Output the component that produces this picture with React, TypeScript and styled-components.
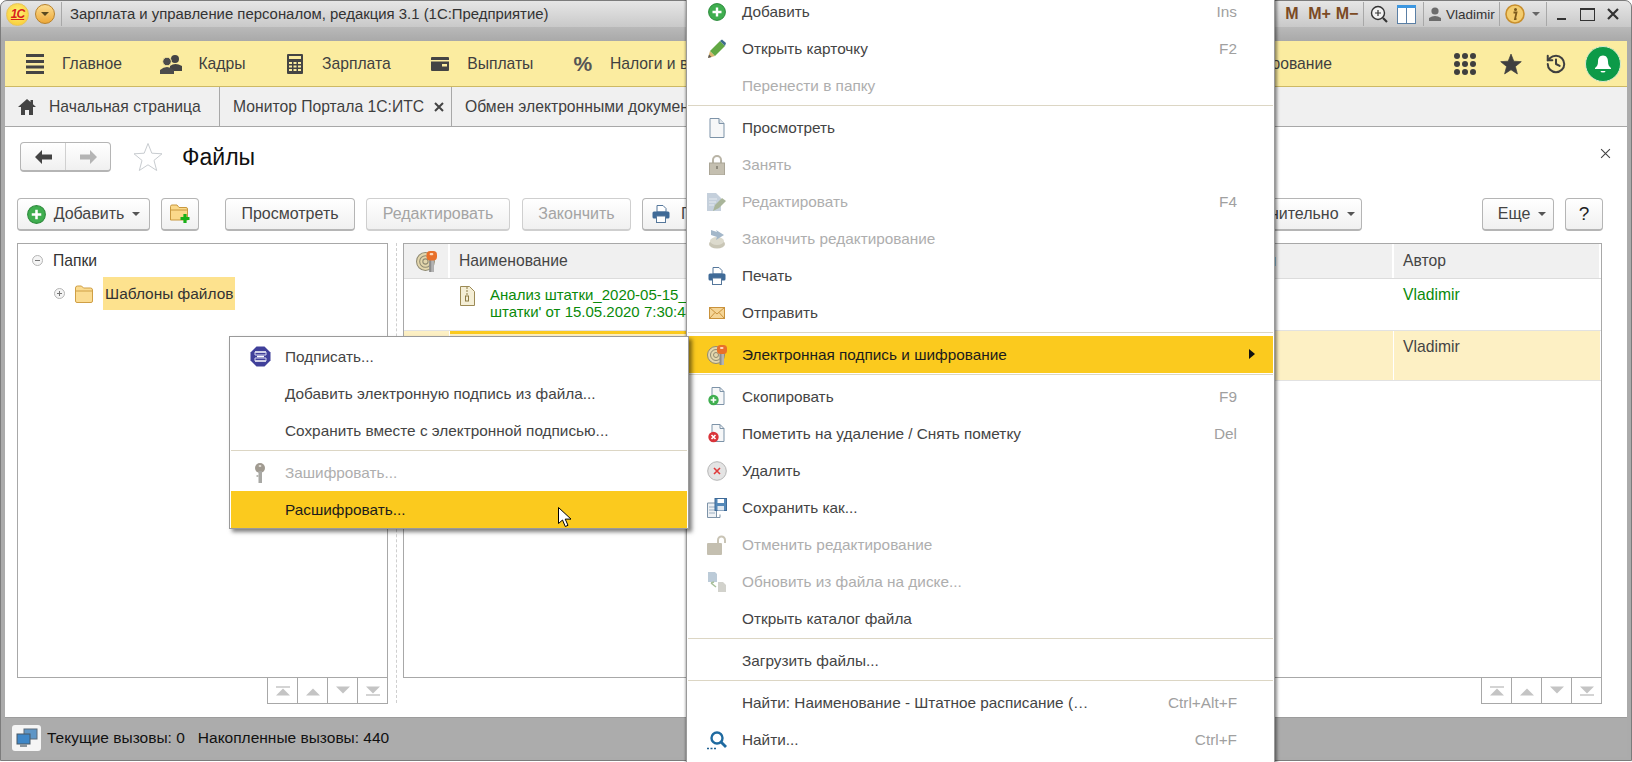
import React from "react";
import styled, { createGlobalStyle } from "styled-components";
import { History } from "lucide-react";

const GlobalStyle = createGlobalStyle`
  html, body {
    margin: 0;
    background: #fff;
    overflow: hidden;
  }
  * { box-sizing: border-box; }
  body {
    font-family: "Liberation Sans", Arial, sans-serif;
    font-size: 15.35px;
    color: #444;
  }
`;

/* ---------- icons ---------- */
const PlusCircle = ({ size = 18 }: { size?: number }) => (
  <svg width={size} height={size} viewBox="0 0 18 18">
    <circle cx="9" cy="9" r="8.4" fill="#3fae4f" stroke="#2b8a3a" />
    <path d="M9 4.5v9M4.5 9h9" stroke="#fff" strokeWidth="2.4" />
  </svg>
);
const Pencil = () => (
  <svg width="20" height="20" viewBox="0 0 20 20">
    <polygon points="1,19 3,12 8,17" fill="#d9b36c" />
    <polygon points="3,12 13,2 18,7 8,17" fill="#62a844" />
    <polygon points="13,2 15,0.5 19,4 18,7" fill="#3d6d8a" />
    <polygon points="1,19 2,15.5 4.5,18" fill="#555" />
  </svg>
);
const Doc = () => (
  <svg width="16" height="20" viewBox="0 0 16 20">
    <path d="M1 .5h9l5 5v14H1z" fill="#f6f7f8" stroke="#7d93a8" />
    <path d="M10 .5v5h5" fill="#dfe4e9" stroke="#7d93a8" />
  </svg>
);
const Lock = () => (
  <svg width="16" height="20" viewBox="0 0 16 20">
    <path d="M4 9V5a4 4 0 0 1 8 0v4" fill="none" stroke="#b9b4a6" strokeWidth="2" />
    <rect x="0.5" y="8" width="15" height="12" fill="#c4bfb0" stroke="#aaa596" />
    <rect x="7" y="11" width="2" height="3" fill="#8f8b7e" />
  </svg>
);
const DocEdit = () => (
  <svg width="20" height="20" viewBox="0 0 20 20">
    <path d="M0 1h9l5 5v13H0z" fill="#c5d0dc" />
    <path d="M2 7h8M2 10h7M2 13h5" stroke="#e6ebf0" />
    <polygon points="6,19 8,13 15,6 19,9 12,16" fill="#a9b59a" />
  </svg>
);
const FinishEdit = () => (
  <svg width="18" height="20" viewBox="0 0 18 20">
    <ellipse cx="9" cy="15" rx="8" ry="4.5" fill="#c9c6b6" />
    <ellipse cx="9" cy="12" rx="7" ry="4" fill="#dcdacd" />
    <path d="M3 1l6 2-1-2 8 5-8 5 1-3-6-2z" fill="#a3b7c9" />
  </svg>
);
const Printer = () => (
  <svg width="18" height="18" viewBox="0 0 18 18">
    <path d="M5 .5h6l3 3V7H5z" fill="#fff" stroke="#55779b" />
    <rect x="0.5" y="6.5" width="17" height="7" rx="1.5" fill="#3f6a97" />
    <rect x="4.5" y="11" width="9" height="6.5" fill="#fff" stroke="#55779b" />
  </svg>
);
const Envelope = () => (
  <svg width="16" height="12" viewBox="0 0 16 12">
    <rect x="0.5" y="0.5" width="15" height="11" fill="#f5d596" stroke="#c9923c" />
    <path d="M.5.5L8 7 15.5.5M.5 11.5L6 5.5M15.5 11.5L10 5.5" fill="none" stroke="#c9923c" />
  </svg>
);
const SignKey = ({ size = 20 }: { size?: number }) => (
  <svg width={size} height={size} viewBox="0 0 20 20">
    <circle cx="9" cy="10" r="8.5" fill="#e3d6ac" stroke="#8f8a72" />
    <circle cx="9" cy="10" r="5.5" fill="none" stroke="#8f8a72" />
    <circle cx="9" cy="10" r="2.5" fill="none" stroke="#8f8a72" />
    <rect x="12.5" y="7" width="4.5" height="13" fill="#8c8c8c" />
    <rect x="14.5" y="7" width="2.5" height="13" fill="#b4b4b4" />
    <rect x="10" y="0" width="10" height="9" rx="3.5" fill="#e8702a" />
    <rect x="13" y="2" width="3.5" height="2" rx="1" fill="#ffd8b8" />
  </svg>
);
const CopyDoc = ({ bad }: { bad?: boolean }) => (
  <svg width="18" height="19" viewBox="0 0 18 19">
    <path d="M4 .5h8l4 4v13H4z" fill="#f6f7f8" stroke="#7d93a8" />
    <path d="M12 .5v4h4" fill="none" stroke="#7d93a8" />
    <circle cx="5.5" cy="13" r="5.2" fill={bad ? "#d9343a" : "#3fae4f"} />
    {bad ? (
      <path d="M3.5 11l4 4M7.5 11l-4 4" stroke="#fff" strokeWidth="1.6" />
    ) : (
      <path d="M5.5 10.2v5.6M2.7 13h5.6" stroke="#fff" strokeWidth="1.6" />
    )}
  </svg>
);
const DeleteCircle = () => (
  <svg width="20" height="20" viewBox="0 0 20 20">
    <circle cx="10" cy="10" r="9.3" fill="#e4e4e4" stroke="#b5b5b5" />
    <path d="M7 7l6 6M13 7l-6 6" stroke="#df3a3a" strokeWidth="1.6" />
  </svg>
);
const SaveAs = () => (
  <svg width="20" height="20" viewBox="0 0 20 20">
    <path d="M.5 5h9v14.5h-9z" fill="#eef1f4" stroke="#7d93a8" />
    <path d="M2 9h6M2 12h6M2 15h6" stroke="#9db0c2" />
    <rect x="8" y="0.5" width="11.5" height="12" fill="#5488b8" stroke="#3f6a97" />
    <rect x="10.5" y="1" width="6.5" height="4" fill="#fff" />
    <rect x="10.5" y="8" width="6.5" height="4.5" fill="#dfe7ef" />
    <path d="M4 19.5h9v-3" fill="none" stroke="#7d93a8" />
  </svg>
);
const Unlock = () => (
  <svg width="20" height="20" viewBox="0 0 20 20">
    <path d="M11 8V5a3.5 3.5 0 0 1 7 0v3" fill="none" stroke="#c9c4b5" strokeWidth="2" />
    <rect x="0" y="8" width="15" height="12" rx="1" fill="#c4bfb0" />
  </svg>
);
const Refresh = () => (
  <svg width="20" height="20" viewBox="0 0 20 20">
    <path d="M1 0h7l2 2v8H1z" fill="#bccbd8" />
    <path d="M11 10h5l3 3v7h-8z" fill="#d2d2cc" />
    <path d="M4 11l5 4M4 11l3-1" stroke="#a9c09a" strokeWidth="1.6" fill="none" />
  </svg>
);
const Search = () => (
  <svg width="20" height="20" viewBox="0 0 20 20">
    <circle cx="10" cy="8" r="5.5" fill="none" stroke="#1f6aa0" strokeWidth="2.4" />
    <path d="M14 12l5 5" stroke="#1f6aa0" strokeWidth="2.8" />
    <path d="M0 18.5h2M3.5 18.5h2M7 18.5h2" stroke="#1f5f90" strokeWidth="1.6" />
  </svg>
);
const Seal = () => (
  <svg width="21" height="21" viewBox="0 0 21 21">
    <polygon points="6.5,0.5 14.5,0.5 20.5,6.5 20.5,14.5 14.5,20.5 6.5,20.5 0.5,14.5 0.5,6.5" fill="#40409a" />
    <path d="M5 6h11M5 15h11M7 10.5h7" stroke="#fff" strokeWidth="1.6" />
    <path d="M5 6v3h11V6M5 15v-3h11v3" fill="none" stroke="#d6d6f0" />
  </svg>
);
const Key = () => (
  <svg width="12" height="20" viewBox="0 0 12 20">
    <circle cx="6" cy="5" r="5" fill="#a09a90" />
    <rect x="4.5" y="8" width="3.5" height="12" fill="#a8a8a4" />
    <rect x="2.5" y="12" width="2" height="2" fill="#b8b8b4" />
    <rect x="4.8" y="2" width="2.4" height="2" fill="#dcd8d0" />
  </svg>
);
const Hamburger = () => (
  <svg width="18" height="20" viewBox="0 0 18 20">
    <path d="M0 1.5h18M0 7.5h18M0 13h18M0 18.5h18" stroke="#444" strokeWidth="3" />
  </svg>
);
const People = () => (
  <svg width="22" height="20" viewBox="0 0 22 20">
    <circle cx="15" cy="5" r="4" fill="#444" />
    <path d="M10 12q5-4 12 0v5H10z" fill="#444" />
    <circle cx="7" cy="7.5" r="4.3" fill="#4c4c4c" stroke="#fbeca0" />
    <path d="M0 20v-4q7-6 14 0v4z" fill="#4c4c4c" />
  </svg>
);
const Calculator = () => (
  <svg width="16" height="20" viewBox="0 0 16 20">
    <rect width="16" height="20" rx="1" fill="#444" />
    <rect x="2" y="2" width="12" height="3" fill="#fbeca0" />
    <path d="M2 8h3v2H2zM6.5 8h3v2h-3zM11 8h3v2h-3zM2 11.5h3v2H2zM6.5 11.5h3v2h-3zM11 11.5h3v2h-3zM2 15h3v2H2zM6.5 15h3v2h-3zM11 15h3v2h-3z" fill="#fbeca0" />
  </svg>
);
const Wallet = () => (
  <svg width="18" height="14" viewBox="0 0 18 14">
    <rect width="18" height="14" rx="1" fill="#444" />
    <rect x="0" y="3" width="18" height="1.5" fill="#fbeca0" />
    <rect x="11" y="7" width="5" height="2.5" fill="#fbeca0" />
  </svg>
);
const HomeIcon = () => (
  <svg width="18" height="16" viewBox="0 0 18 16">
    <path d="M9 0L0 8h3v8h4v-5h4v5h4V8h3l-3-2.7V1h-2.5v2.1z" fill="#444" />
  </svg>
);
const ArrowIcon = ({ right, color }: { right?: boolean; color: string }) => (
  <svg width="17" height="14" viewBox="0 0 17 14" style={right ? { transform: "scaleX(-1)" } : undefined}>
    <path d="M0 7l7-7v4.5h10v5H7V14z" fill={color} />
  </svg>
);
const StarIcon = ({ size, fill, stroke }: { size: number; fill: string; stroke: string }) => (
  <svg width={size} height={size} viewBox="0 0 30 30">
    <polygon points="15,1.5 18.8,11.2 29,11.8 21,18.4 23.7,28.5 15,22.8 6.3,28.5 9,18.4 1,11.8 11.2,11.2" fill={fill} stroke={stroke} />
  </svg>
);
const FolderPlus = () => (
  <svg width="20" height="20" viewBox="0 0 20 20">
    <path d="M.5 2.5q0-1.5 1.5-1.5h5l2 2.5h7q1.5 0 1.5 1.5v11H.5z" fill="#fbd98a" stroke="#c8983e" />
    <path d="M.5 6h17" stroke="#c8983e" />
    <path d="M15 10v9M10.5 14.5h9" stroke="#18b018" strokeWidth="3.2" />
  </svg>
);
const FolderIcon = () => (
  <svg width="18" height="18" viewBox="0 0 18 18">
    <path d="M.5 3q0-2 2-2h4l2 2h7q2 0 2 2v11q0 1.5-1.5 1.5H2Q.5 17.500.5 16z" fill="#fbdc92" stroke="#cf9f45" />
    <path d="M.5 6h17" stroke="#cf9f45" />
  </svg>
);
const TreeToggle = ({ open }: { open?: boolean }) => (
  <svg width="11" height="11" viewBox="0 0 11 11">
    <circle cx="5.5" cy="5.5" r="5" fill="#f4f4f4" stroke="#b4b4b4" />
    <path d={open ? "M3 5.5h5" : "M3 5.5h5M5.5 3v5"} stroke="#777" />
  </svg>
);
const ZipIcon = () => (
  <svg width="15" height="20" viewBox="0 0 15 20">
    <path d="M.5.5h9l5 5v14H.5z" fill="#f4eed6" stroke="#9c8a55" />
    <path d="M6 2h2M6 5h2M6 8h2" stroke="#8c7a45" />
    <rect x="5.5" y="10" width="3" height="5" fill="none" stroke="#8c7a45" />
  </svg>
);
const PagerIcon = ({ dir, bar }: { dir: "up" | "down"; bar?: boolean }) => (
  <svg width="14" height="10" viewBox="0 0 14 10">
    {dir === "up" ? (
      <>
        {bar && <rect x="0" y="0" width="14" height="2" fill="#d4d4d4" />}
        <polygon points="7,2.5 14,9.5 0,9.5" fill="#c4c4c4" />
      </>
    ) : (
      <>
        <polygon points="0,0.5 14,0.5 7,7.5" fill="#c4c4c4" />
        {bar && <rect x="0" y="8" width="14" height="2" fill="#d4d4d4" />}
      </>
    )}
  </svg>
);
const Magnifier = () => (
  <svg width="18" height="18" viewBox="0 0 18 18">
    <circle cx="8" cy="8" r="6.5" fill="#f2f2f2" stroke="#333" strokeWidth="1.4" />
    <path d="M5 8h6M8 5v6" stroke="#333" strokeWidth="1.2" />
    <path d="M13 13l4 4" stroke="#333" strokeWidth="2.2" />
  </svg>
);
const PanelIcon = () => (
  <svg width="19" height="19" viewBox="0 0 19 19">
    <rect x="0.5" y="0.5" width="18" height="18" fill="#fff" stroke="#5a7fa5" />
    <rect x="0" y="0" width="19" height="3" fill="#3d97e0" />
    <path d="M9.5 3v16" stroke="#5a7fa5" />
  </svg>
);
const UserIcon = () => (
  <svg width="12" height="14" viewBox="0 0 12 14">
    <circle cx="6" cy="4" r="3.6" fill="#6b6b6b" />
    <path d="M0 14v-3q6-4 12 0v3z" fill="#6b6b6b" />
  </svg>
);
const InfoBadge = () => (
  <svg width="20" height="20" viewBox="0 0 20 20">
    <circle cx="10" cy="10" r="9" fill="#f3cc6e" stroke="#c88f2d" strokeWidth="1.6" />
    <circle cx="10.5" cy="5.5" r="1.5" fill="#7c5a1c" />
    <path d="M8.5 8.5h3L10 15h1.5" fill="none" stroke="#7c5a1c" strokeWidth="1.8" />
  </svg>
);
const WinClose = () => (
  <svg width="12" height="12" viewBox="0 0 12 12">
    <path d="M1 1l10 10M11 1L1 11" stroke="#333" strokeWidth="2.2" />
  </svg>
);
const ThinClose = ({ size, width }: { size: number; width: number }) => (
  <svg width={size} height={size} viewBox="0 0 10 10">
    <path d="M1 1l8 8M9 1L1 9" stroke="#444" strokeWidth={width} />
  </svg>
);
const GridDots = () => (
  <svg width="22" height="22" viewBox="0 0 22 22" fill="#3f3f3f">
    {[3, 11, 19].map((y) =>
      [3, 11, 19].map((x) => <circle key={`${x}-${y}`} cx={x} cy={y} r="3" />)
    )}
  </svg>
);
const BellIcon = () => (
  <svg width="20" height="20" viewBox="0 0 20 20">
    <path d="M10 1.5c-3.5 0-5 3-5 6 0 3.5-1 5-3 6.5v1h16v-1c-2-1.5-3-3-3-6.5 0-3-1.5-6-5-6z" fill="#fff" />
    <path d="M7.5 17h5a2.5 1.5 0 0 1-5 0z" fill="#fff" />
  </svg>
);
const NetworkIcon = () => (
  <svg width="22" height="20" viewBox="0 0 22 20">
    <rect x="8" y="1" width="13" height="10" fill="#5f96c6" stroke="#5c6a78" />
    <rect x="1" y="6" width="13" height="10" fill="#3e87c8" stroke="#4a5864" />
    <rect x="4" y="16" width="7" height="3" fill="#8a949c" />
  </svg>
);
const Pointer = () => (
  <svg width="14" height="21" viewBox="0 0 14 21">
    <path d="M.5.5v16l4-3.5 2.8 6.5 2.700-1.200-2.800-6.200H13z" fill="#fff" stroke="#000" />
  </svg>
);

/* ---------- window chrome ---------- */
const Page = styled.div`
  position: relative;
  width: 1632px;
  height: 762px;
  overflow: hidden;
`;

const Frame = styled.div`
  position: absolute;
  inset: 0 0 1px 0;
  display: flex;
  flex-direction: column;
  border: 1px solid #7c7c7c;
  border-radius: 7px 7px 0 0;
  background: #ababab;
`;

const TitleBar = styled.div`
  height: 26px;
  flex: none;
  display: flex;
  align-items: center;
  padding-left: 5px;
  border-radius: 6px 6px 0 0;
  background: linear-gradient(#e6e6e6, #c9c9c9);
`;

const TitleBand = styled.div`
  height: 14px;
  flex: none;
  background: linear-gradient(#b9b9b9, #a9a9a9);
`;

const LogoBadge = styled.div`
  width: 23px;
  height: 23px;
  flex: none;
  border-radius: 50%;
  display: flex;
  align-items: center;
  justify-content: center;
  background: radial-gradient(circle at 50% 40%, #fff27a, #f8c62a);
  border: 1px solid #e8c45a;
  color: #d8211c;
  font-size: 12px;
  font-weight: bold;
  font-style: italic;
  letter-spacing: -1px;
  text-decoration: underline;
`;

const MenuBadge = styled.div`
  width: 20px;
  height: 20px;
  flex: none;
  margin-left: 6px;
  border-radius: 50%;
  display: flex;
  align-items: center;
  justify-content: center;
  background: linear-gradient(#fbdc90, #eda93a);
  border: 1px solid #b8812a;
`;

const Caret = styled.span<{ $color?: string; $size?: number }>`
  display: inline-block;
  width: 0;
  height: 0;
  border-left: ${(p) => p.$size ?? 4}px solid transparent;
  border-right: ${(p) => p.$size ?? 4}px solid transparent;
  border-top: ${(p) => p.$size ?? 4}px solid ${(p) => p.$color ?? "#555"};
`;

const TitleSep = styled.div<{ $before?: number }>`
  width: 1px;
  height: 24px;
  flex: none;
  margin-left: ${(p) => p.$before ?? 0}px;
  background: #a8a8a8;
`;

const TitleText = styled.div`
  margin-left: 8px;
  font-size: 14.9px;
  color: #333;
  white-space: nowrap;
`;

const TitleTools = styled.div`
  margin-left: auto;
  margin-right: 4px;
  display: flex;
  align-items: center;
`;

const ToolSlot = styled.div<{ $w: number }>`
  width: ${(p) => p.$w}px;
  flex: none;
  display: flex;
  justify-content: center;
  align-items: center;
`;

const MemoryKey = styled(ToolSlot)`
  color: #7b4a24;
  font-size: 16px;
  font-weight: bold;
  white-space: nowrap;
`;

const UserName = styled(ToolSlot)`
  justify-content: flex-start;
  font-size: 13.5px;
  color: #333;
`;

const MinimizeMark = styled.div`
  width: 9px;
  height: 2px;
  margin-top: 9px;
  background: #333;
`;

const MaximizeMark = styled.div`
  width: 15px;
  height: 13px;
  border: 1px solid #333;
  border-top-width: 2px;
`;

const Body = styled.div`
  flex: 1;
  margin: 0 4px 3px;
  display: flex;
  flex-direction: column;
  min-height: 0;
`;

const NavBar = styled.div`
  height: 46px;
  flex: none;
  display: flex;
  align-items: center;
  gap: 34.5px;
  padding: 0 0 0 15px;
  background: #fbeca0;
  border-bottom: 1px solid #cdb964;
  font-size: 15.7px;
`;

const NavItem = styled.div`
  display: flex;
  align-items: center;
  color: #3f3f3f;
  white-space: nowrap;
`;

const NavIconSlot = styled.div`
  width: 30px;
  margin-right: 12px;
  display: flex;
  justify-content: center;
`;

const Percent = styled.span`
  font-size: 21px;
  font-weight: bold;
  color: #555;
`;

const NavRight = styled.div`
  margin-left: auto;
  display: flex;
  align-items: center;
`;

const NavTool = styled.div<{ $w: number; $before?: number }>`
  width: ${(p) => p.$w}px;
  margin-left: ${(p) => p.$before ?? 0}px;
  display: flex;
  justify-content: center;
  color: #3f3f3f;
`;

const BellCircle = styled.div`
  width: 36px;
  height: 36px;
  border-radius: 50%;
  display: flex;
  align-items: center;
  justify-content: center;
  background: #0c9a48;
  border: 1px solid #d9ead0;
`;

const TabBar = styled.div`
  height: 40px;
  flex: none;
  display: flex;
  background: #f0f0f0;
  border-bottom: 1px solid #a8a8a8;
  font-size: 15.7px;
`;

const Tab = styled.div<{ $w?: number }>`
  width: ${(p) => (p.$w ? `${p.$w}px` : "auto")};
  flex: none;
  display: flex;
  align-items: center;
  padding: 0 0 0 13px;
  border-right: 1px solid #a8a8a8;
  color: #3f3f3f;
  white-space: nowrap;
`;

const TabHome = styled.span`
  display: flex;
  margin-right: 13px;
`;

const TabClose = styled.span`
  display: flex;
  margin-left: 10px;
`;

/* ---------- form ---------- */
const Content = styled.div`
  flex: 1;
  position: relative;
  background: #fff;
  min-height: 0;
`;

const HeadRow = styled.div`
  display: flex;
  align-items: center;
  height: 30px;
  margin-top: 15px;
  padding-left: 15px;
`;

const NavGroup = styled.div`
  width: 91px;
  height: 30px;
  display: flex;
  border: 1px solid #b5b5b5;
  border-bottom-width: 2px;
  border-radius: 4px;
  background: linear-gradient(#fff, #f0f0f0);
`;

const NavGroupCell = styled.div<{ $divided?: boolean }>`
  flex: 1;
  display: flex;
  align-items: center;
  justify-content: center;
  border-left: ${(p) => (p.$divided ? "1px solid #d0d0d0" : "none")};
`;

const FavStar = styled.div`
  margin-left: 22px;
  display: flex;
`;

const FormTitle = styled.h1`
  margin: 0 0 0 19px;
  font-size: 23px;
  font-weight: normal;
  color: #111;
`;

const CloseForm = styled.div`
  position: absolute;
  top: 21px;
  right: 16px;
  display: flex;
`;

const Toolbar = styled.div`
  display: flex;
  height: 33px;
  margin-top: 26px;
  padding: 0 24px 0 12px;
  font-size: 16px;
`;

const Button = styled.div<{
  $w: number;
  $gap?: number;
  $off?: boolean;
  $push?: boolean;
  $left?: number;
  $inner?: number;
}>`
  width: ${(p) => p.$w}px;
  height: 33px;
  flex: none;
  margin-left: ${(p) => (p.$push ? "auto" : `${p.$gap ?? 0}px`)};
  display: flex;
  align-items: center;
  justify-content: ${(p) => (p.$w > 200 ? "flex-start" : "center")};
  gap: ${(p) => p.$inner ?? 8}px;
  padding-left: ${(p) => p.$left ?? 0}px;
  border: 1px solid ${(p) => (p.$off ? "#cfcfcf" : "#b5b5b5")};
  border-bottom-width: 2px;
  border-radius: 4px;
  background: linear-gradient(#fff, #f0f0f0);
  color: ${(p) => (p.$off ? "#a4a4a4" : "#444")};
  white-space: nowrap;
`;

const HelpMark = styled.span`
  font-size: 19px;
  color: #222;
`;

const Panes = styled.div`
  display: flex;
  margin-top: 12px;
`;

const PaneColumn = styled.div<{ $w: number; $gap: number }>`
  width: ${(p) => p.$w}px;
  margin-left: ${(p) => p.$gap}px;
  flex: none;
`;

const PaneBox = styled.div`
  height: 435px;
  border: 1px solid #a8a8a8;
  position: relative;
  overflow: hidden;
  font-size: 15.7px;
`;

const Splitter = styled.div`
  width: 0;
  height: 460px;
  margin-left: 8px;
  border-left: 1px dashed #cfcfcf;
`;

const Pager = styled.div`
  display: flex;
  width: 121px;
  height: 26px;
  margin-left: auto;
  border: 1px solid #a8a8a8;
  border-top: 0;
`;

const PagerCell = styled.div`
  flex: 1;
  display: flex;
  align-items: center;
  justify-content: center;
  & + & { border-left: 1px solid #a8a8a8; }
`;

const TreeRoot = styled.div`
  display: flex;
  align-items: center;
  height: 33px;
  padding-left: 14px;
  color: #333;
`;

const TreeChild = styled.div`
  display: flex;
  align-items: center;
  height: 33px;
  padding-left: 36px;
`;

const TreeFolder = styled.span`
  display: flex;
  margin-left: 10px;
`;

const TreeRootLabel = styled.span`
  margin-left: 10px;
`;

const TreeLabel = styled.span`
  margin-left: 10px;
  padding: 0 2px;
  line-height: 33px;
  font-size: 15.45px;
  background: #fde28e;
  color: #333;
`;

const TableRow = styled.div<{ $h: number; $line: string; $bg?: string }>`
  display: flex;
  height: ${(p) => p.$h}px;
  background: ${(p) => p.$bg ?? "transparent"};
  border-bottom: 1px solid ${(p) => p.$line};
`;

const HeadCell = styled.div<{ $w?: number }>`
  width: ${(p) => (p.$w ? `${p.$w}px` : "auto")};
  flex: ${(p) => (p.$w ? "none" : 1)};
  display: flex;
  align-items: center;
  padding-left: 9px;
  background: #f0f0f0;
  border-right: 2px solid #fff;
  color: #444;
`;

const IconHeadCell = styled(HeadCell)`
  padding-left: 12px;
`;

const Cell = styled.div<{ $w?: number; $color?: string; $selected?: boolean }>`
  width: ${(p) => (p.$w ? `${p.$w}px` : "auto")};
  flex: ${(p) => (p.$w ? "none" : 1)};
  display: flex;
  padding: 7px 0 0 9px;
  color: ${(p) => p.$color ?? "#444"};
  line-height: 17px;
  border-right: ${(p) => (p.$selected ? "0" : "1px solid #fff")};
  border-top: ${(p) => (p.$selected ? "3px solid #fbca1e" : "0")};
  white-space: nowrap;
`;

const FileIcon = styled.span`
  display: flex;
  width: 31px;
  flex: none;
  padding-left: 1px;
`;

const FileName = styled.div`
  font-size: 15px;
`;

const StatusBar = styled.div`
  height: 40px;
  flex: none;
  display: flex;
  align-items: center;
  padding-left: 7px;
  border-top: 1px solid #9c9c9c;
  background: #acacac;
  color: #111;
  font-size: 15.5px;
`;

const StatusButton = styled.div`
  width: 29px;
  height: 26px;
  margin-right: 6px;
  display: flex;
  align-items: center;
  justify-content: center;
  background: #f5f5f5;
  border-radius: 3px;
`;

const StatusText = styled.span<{ $gap?: number }>`
  margin-left: ${(p) => p.$gap ?? 0}px;
  white-space: nowrap;
`;

/* ---------- popup menus ---------- */
const MainMenu = styled.div`
  position: absolute;
  left: 686px;
  top: -8px;
  width: 589px;
  height: 780px;
  padding: 0 1px;
  --slot: 54px;
  background: #fff;
  border: 1px solid #9a9a9a;
  box-shadow: 2px 0 3px rgba(0, 0, 0, 0.45), -1px 0 2px rgba(0, 0, 0, 0.25);
`;

const SubMenu = styled.div`
  position: absolute;
  left: 229px;
  top: 336px;
  width: 460px;
  height: 193px;
  padding: 1px;
  --slot: 54px;
  background: #fff;
  border: 1px solid #9a9a9a;
  box-shadow: 3px 3px 4px rgba(0, 0, 0, 0.5);
`;

const MenuRow = styled.div<{ $active?: boolean; $off?: boolean }>`
  position: relative;
  display: flex;
  align-items: center;
  height: 37px;
  background: ${(p) => (p.$active ? "#fbca1e" : "transparent")};
  color: ${(p) => (p.$active ? "#1c1c1c" : p.$off ? "#aeaeae" : "#444")};
  white-space: nowrap;
`;

const MenuIconSlot = styled.div`
  width: var(--slot);
  padding-left: 4px;
  flex: none;
  display: flex;
  justify-content: center;
`;

const Shortcut = styled.span`
  margin-left: auto;
  margin-right: 36px;
  color: #a0a0a0;
`;

const SubArrow = styled.span`
  position: absolute;
  right: 18px;
  top: 13px;
  width: 0;
  height: 0;
  border-top: 5px solid transparent;
  border-bottom: 5px solid transparent;
  border-left: 6px solid #111;
`;

const MenuSep = styled.div`
  height: 5px;
  padding-top: 1px;
  &::before {
    content: "";
    display: block;
    height: 1px;
    background: #dcd6c4;
  }
`;

const CursorMark = styled.div`
  position: absolute;
  left: 558px;
  top: 507px;
  display: flex;
`;

type Item = { label?: string; icon?: React.ReactNode; short?: string; off?: boolean; active?: boolean; sub?: boolean };

const mainItems: Item[] = [
  { label: "Добавить", icon: <PlusCircle />, short: "Ins" },
  { label: "Открыть карточку", icon: <Pencil />, short: "F2" },
  { label: "Перенести в папку", off: true },
  {},
  { label: "Просмотреть", icon: <Doc /> },
  { label: "Занять", icon: <Lock />, off: true },
  { label: "Редактировать", icon: <DocEdit />, short: "F4", off: true },
  { label: "Закончить редактирование", icon: <FinishEdit />, off: true },
  { label: "Печать", icon: <Printer /> },
  { label: "Отправить", icon: <Envelope /> },
  {},
  { label: "Электронная подпись и шифрование", icon: <SignKey />, active: true, sub: true },
  {},
  { label: "Скопировать", icon: <CopyDoc />, short: "F9" },
  { label: "Пометить на удаление / Снять пометку", icon: <CopyDoc bad />, short: "Del" },
  { label: "Удалить", icon: <DeleteCircle /> },
  { label: "Сохранить как...", icon: <SaveAs /> },
  { label: "Отменить редактирование", icon: <Unlock />, off: true },
  { label: "Обновить из файла на диске...", icon: <Refresh />, off: true },
  { label: "Открыть каталог файла" },
  {},
  { label: "Загрузить файлы..." },
  {},
  { label: "Найти: Наименование - Штатное расписание (…", short: "Ctrl+Alt+F" },
  { label: "Найти...", icon: <Search />, short: "Ctrl+F" },
];

const subItems: Item[] = [
  { label: "Подписать...", icon: <Seal /> },
  { label: "Добавить электронную подпись из файла..." },
  { label: "Сохранить вместе с электронной подписью..." },
  {},
  { label: "Зашифровать...", icon: <Key />, off: true },
  { label: "Расшифровать...", active: true },
];

const renderItems = (items: Item[]) =>
  items.map((item, i) =>
    item.label ? (
      <MenuRow key={i} $active={item.active} $off={item.off}>
        <MenuIconSlot>{item.icon}</MenuIconSlot>
        {item.label}
        {item.short && <Shortcut>{item.short}</Shortcut>}
        {item.sub && <SubArrow />}
      </MenuRow>
    ) : (
      <MenuSep key={i} />
    )
  );

const PagerRow = () => (
  <Pager>
    <PagerCell>
      <PagerIcon dir="up" bar />
    </PagerCell>
    <PagerCell>
      <PagerIcon dir="up" />
    </PagerCell>
    <PagerCell>
      <PagerIcon dir="down" />
    </PagerCell>
    <PagerCell>
      <PagerIcon dir="down" bar />
    </PagerCell>
  </Pager>
);

export default function App() {
  return (
    <Page>
      <GlobalStyle />
      <Frame>
        <TitleBar>
          <LogoBadge>1С</LogoBadge>
          <MenuBadge>
            <Caret $color="#5a4a20" />
          </MenuBadge>
          <TitleSep $before={6} />
          <TitleText>Зарплата и управление персоналом, редакция 3.1 (1С:Предприятие)</TitleText>
          <TitleTools>
            <MemoryKey $w={28}>M</MemoryKey>
            <MemoryKey $w={27}>M+</MemoryKey>
            <MemoryKey $w={28}>M−</MemoryKey>
            <TitleSep $before={2} />
            <ToolSlot $w={30}>
              <Magnifier />
            </ToolSlot>
            <ToolSlot $w={24}>
              <PanelIcon />
            </ToolSlot>
            <TitleSep $before={5} />
            <ToolSlot $w={22}>
              <UserIcon />
            </ToolSlot>
            <UserName $w={49}>Vladimir</UserName>
            <TitleSep $before={4} />
            <ToolSlot $w={30}>
              <InfoBadge />
            </ToolSlot>
            <ToolSlot $w={12}>
              <Caret $color="#666" />
            </ToolSlot>
            <TitleSep $before={4} />
            <ToolSlot $w={28}>
              <MinimizeMark />
            </ToolSlot>
            <ToolSlot $w={24}>
              <MaximizeMark />
            </ToolSlot>
            <ToolSlot $w={28}>
              <WinClose />
            </ToolSlot>
          </TitleTools>
        </TitleBar>
        <TitleBand />
        <Body>
          <NavBar>
            <NavItem>
              <NavIconSlot>
                <Hamburger />
              </NavIconSlot>
              Главное
            </NavItem>
            <NavItem>
              <NavIconSlot>
                <People />
              </NavIconSlot>
              Кадры
            </NavItem>
            <NavItem>
              <NavIconSlot>
                <Calculator />
              </NavIconSlot>
              Зарплата
            </NavItem>
            <NavItem>
              <NavIconSlot>
                <Wallet />
              </NavIconSlot>
              Выплаты
            </NavItem>
            <NavItem>
              <NavIconSlot>
                <Percent>%</Percent>
              </NavIconSlot>
              Налоги и взносы
            </NavItem>
            <NavRight>
              <NavItem>Администрирование</NavItem>
              <NavTool $w={46} $before={110}>
                <GridDots />
              </NavTool>
              <NavTool $w={46}>
                <StarIcon size={22} fill="#3f3f3f" stroke="#3f3f3f" />
              </NavTool>
              <NavTool $w={44}>
                <History size={22} strokeWidth={2.2} />
              </NavTool>
              <NavTool $w={49}>
                <BellCircle>
                  <BellIcon />
                </BellCircle>
              </NavTool>
            </NavRight>
          </NavBar>
          <TabBar>
            <Tab $w={215}>
              <TabHome>
                <HomeIcon />
              </TabHome>
              Начальная страница
            </Tab>
            <Tab $w={232}>
              Монитор Портала 1С:ИТС
              <TabClose>
                <ThinClose size={10} width={2} />
              </TabClose>
            </Tab>
            <Tab>Обмен электронными документами</Tab>
          </TabBar>
          <Content>
            <HeadRow>
              <NavGroup>
                <NavGroupCell>
                  <ArrowIcon color="#444" />
                </NavGroupCell>
                <NavGroupCell $divided>
                  <ArrowIcon right color="#b4b4b4" />
                </NavGroupCell>
              </NavGroup>
              <FavStar>
                <StarIcon size={30} fill="#fff" stroke="#c8ccd0" />
              </FavStar>
              <FormTitle>Файлы</FormTitle>
            </HeadRow>
            <CloseForm>
              <ThinClose size={11} width={1} />
            </CloseForm>
            <Toolbar>
              <Button $w={133}>
                <PlusCircle size={19} />
                Добавить
                <Caret />
              </Button>
              <Button $w={38} $gap={11}>
                <FolderPlus />
              </Button>
              <Button $w={130} $gap={26}>
                Просмотреть
              </Button>
              <Button $w={144} $gap={11} $off>
                Редактировать
              </Button>
              <Button $w={109} $gap={12} $off>
                Закончить
              </Button>
              <Button $w={201} $gap={11} $left={9} $inner={11}>
                <Printer />
                Печать
              </Button>
              <Button $w={146} $push>
                Дополнительно
                <Caret />
              </Button>
              <Button $w={72} $gap={120} $left={8}>
                Еще
                <Caret />
              </Button>
              <Button $w={38} $gap={11}>
                <HelpMark>?</HelpMark>
              </Button>
            </Toolbar>
            <Panes>
              <PaneColumn $w={371} $gap={12}>
                <PaneBox>
                  <TreeRoot>
                    <TreeToggle open />
                    <TreeRootLabel>Папки</TreeRootLabel>
                  </TreeRoot>
                  <TreeChild>
                    <TreeToggle />
                    <TreeFolder>
                      <FolderIcon />
                    </TreeFolder>
                    <TreeLabel>Шаблоны файлов</TreeLabel>
                  </TreeChild>
                </PaneBox>
                <PagerRow />
              </PaneColumn>
              <Splitter />
              <PaneColumn $w={1199} $gap={6}>
                <PaneBox>
                  <TableRow $h={35} $line="#dcdcdc">
                    <IconHeadCell $w={46}>
                      <SignKey size={21} />
                    </IconHeadCell>
                    <HeadCell $w={791}>Наименование</HeadCell>
                    <HeadCell $w={153}>Тип</HeadCell>
                    <HeadCell>Автор</HeadCell>
                  </TableRow>
                  <TableRow $h={52} $line="#e2e2e2">
                    <Cell $w={46} />
                    <Cell $w={791} $color="#0a8a0a">
                      <FileIcon>
                        <ZipIcon />
                      </FileIcon>
                      <FileName>
                        Анализ штатки_2020-05-15_07-30-44.zip
                        <br />
                        штатки' от 15.05.2020 7:30:44
                      </FileName>
                    </Cell>
                    <Cell $w={153} />
                    <Cell $color="#0a8a0a">Vladimir</Cell>
                  </TableRow>
                  <TableRow $h={50} $line="#e2e2e2" $bg="#fdf0c4">
                    <Cell $w={46} />
                    <Cell $w={791} $selected />
                    <Cell $w={153} />
                    <Cell>Vladimir</Cell>
                  </TableRow>
                </PaneBox>
                <PagerRow />
              </PaneColumn>
            </Panes>
          </Content>
          <StatusBar>
            <StatusButton>
              <NetworkIcon />
            </StatusButton>
            <StatusText>Текущие вызовы: 0</StatusText>
            <StatusText $gap={13}>Накопленные вызовы: 440</StatusText>
          </StatusBar>
        </Body>
      </Frame>
      <MainMenu>{renderItems(mainItems)}</MainMenu>
      <SubMenu>{renderItems(subItems)}</SubMenu>
      <CursorMark>
        <Pointer />
      </CursorMark>
    </Page>
  );
}
